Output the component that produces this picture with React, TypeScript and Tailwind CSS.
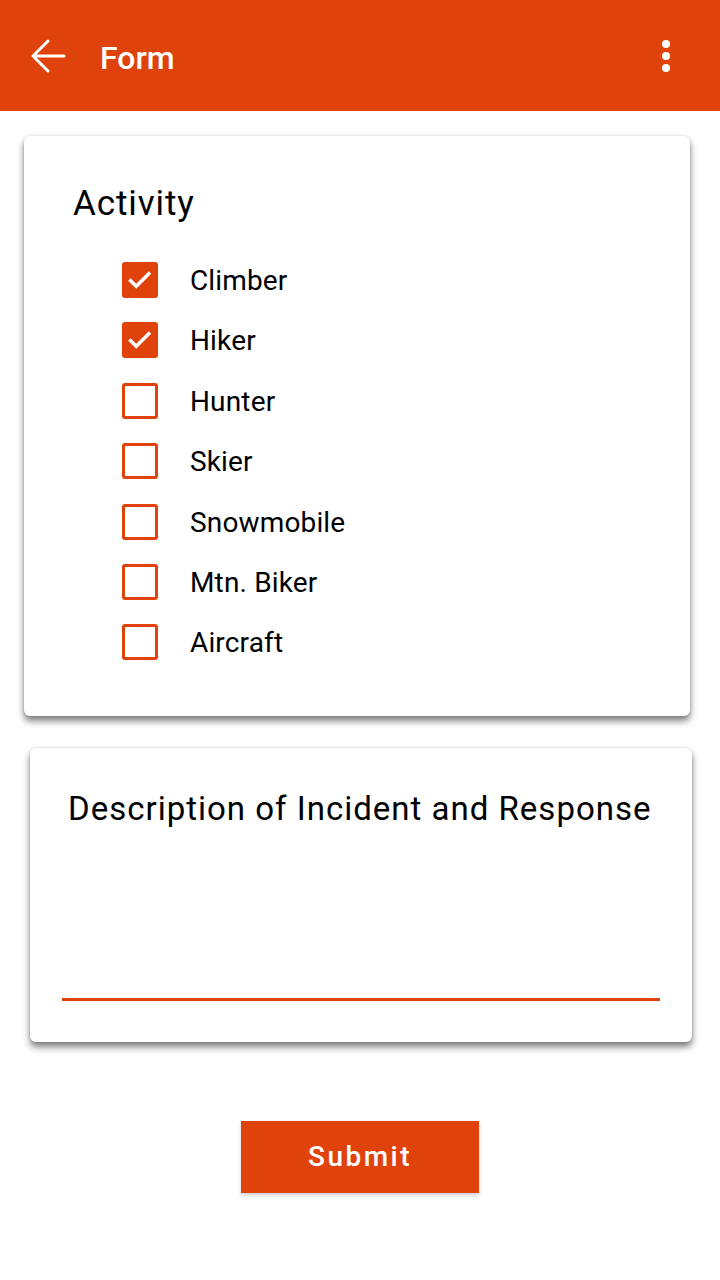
import React from "react";

const items = [
  { label: "Climber", checked: true },
  { label: "Hiker", checked: true },
  { label: "Hunter", checked: false },
  { label: "Skier", checked: false },
  { label: "Snowmobile", checked: false },
  { label: "Mtn. Biker", checked: false },
  { label: "Aircraft", checked: false },
];

function Box({ checked }: { checked: boolean }) {
  if (checked) {
    return (
      <div className="w-[36px] h-[36px] rounded-[3px] bg-[#e0420c] flex items-center justify-center">
        <svg width="30" height="30" viewBox="0 0 24 24" fill="none">
          <path d="M4.5 12.5l4.5 4.5 10-10" stroke="white" strokeWidth="2.8" strokeLinecap="square" />
        </svg>
      </div>
    );
  }
  return <div className="w-[36px] h-[36px] rounded-[3px] border-[3px] border-[#e0420c]" />;
}

export default function App() {
  return (
    <div className="w-[720px] h-[1280px] bg-white flex flex-col" style={{ fontFamily: "Roboto, 'Noto Sans', sans-serif" }}>
      <div className="h-[111px] bg-[#e0420c] flex items-center pl-[24px] pr-[50px] shrink-0">
        <svg width="48" height="48" viewBox="0 0 24 24" fill="none">
          <path d="M20 12H4.6M12 4.5L4.5 12l7.5 7.5" stroke="white" strokeWidth="1.5" strokeLinecap="round" strokeLinejoin="round" />
        </svg>
        <div className="ml-[28px] text-white text-[32px] font-medium leading-[40px] mt-[4px]">Form</div>
        <div className="flex-1" />
        <div className="flex flex-col gap-[4px]">
          <div className="w-[8px] h-[8px] rounded-full bg-white" />
          <div className="w-[8px] h-[8px] rounded-full bg-white" />
          <div className="w-[8px] h-[8px] rounded-full bg-white" />
        </div>
      </div>

      <div className="ml-[24px] mr-[30px] mt-[25px] h-[580px] bg-white rounded-[6px] shadow-[0_5px_7px_rgba(0,0,0,0.5),0_0_3px_rgba(0,0,0,0.15)] pl-[49px] pt-[43px]">
        <div className="text-[35px] text-black leading-[50px] tracking-[0.9px]">Activity</div>
        <div className="flex flex-col mt-[33px] pl-[49px] gap-[24.4px]">
          {items.map((it) => (
            <div key={it.label} className="flex items-center h-[36px]">
              <Box checked={it.checked} />
              <span className="ml-[32px] text-[28px] text-black leading-[36px] tracking-[0.15px] mt-[2px]">{it.label}</span>
            </div>
          ))}
        </div>
      </div>

      <div className="ml-[30px] mr-[28px] mt-[32px] h-[294px] bg-white rounded-[6px] shadow-[0_5px_7px_rgba(0,0,0,0.5),0_0_3px_rgba(0,0,0,0.15)] pt-[41px] px-[32px] flex flex-col">
        <div className="text-[33px] text-black leading-[40px] tracking-[1px] whitespace-nowrap ml-[6px]">Description of Incident and Response</div>
        <div className="flex-1" />
        <div className="h-[3px] bg-[#e0420c] mb-[41px]" />
      </div>

      <div className="flex justify-center mt-[79px]">
        <button className="w-[238px] h-[72px] bg-[#e0420c] text-white text-[28px] font-medium tracking-[2.5px] shadow-[0_2px_4px_rgba(0,0,0,0.2)]">
          Submit
        </button>
      </div>
    </div>
  );
}
